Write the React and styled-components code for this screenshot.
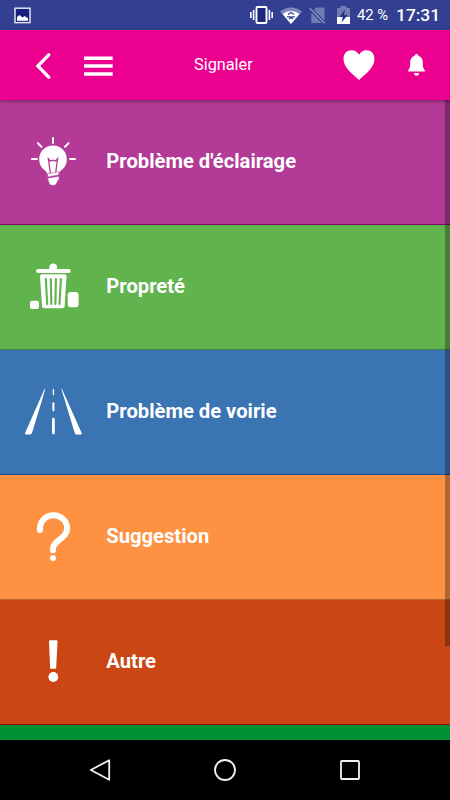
import React from 'react';
import styled, { createGlobalStyle } from 'styled-components';

const GlobalStyle = createGlobalStyle`
  * {
    box-sizing: border-box;
  }
  body {
    margin: 0;
    font-family: Roboto, sans-serif;
    color: #fff;
  }
  svg {
    display: block;
    flex: none;
  }
`;

const Screen = styled.div`
  display: flex;
  flex-direction: column;
  width: 450px;
  height: 800px;
  overflow: hidden;
  background: #000;
`;

const StatusBar = styled.div`
  display: flex;
  align-items: center;
  height: 30px;
  padding: 0 10px 0 14px;
  background: #334092;
`;

const StatusIcons = styled.div`
  display: grid;
  grid-template-columns: 30px 29px 28px 13px;
  align-items: center;
  margin-left: auto;
`;

const Battery = styled.span`
  width: 39px;
  margin-left: 7px;
  font-size: 14.8px;
  line-height: 30px;
  white-space: nowrap;
`;

const Clock = styled.span`
  width: 44px;
  font-size: 17.4px;
  font-weight: 500;
  line-height: 29px;
`;

const Header = styled.header`
  position: relative;
  z-index: 1;
  display: grid;
  grid-template-columns: 84px 30px 1fr 34px 48px 25px;
  align-items: center;
  height: 70px;
  background: #eb008f;
  box-shadow: 0 1px 4px rgba(0, 0, 0, 0.4);
`;

const Title = styled.h1`
  margin: 0 0 0 80px;
  font-size: 16.3px;
  font-weight: 400;
  line-height: 20px;
`;

const BackIcon = styled.svg`
  justify-self: end;
  margin: 2px 33px 0 0;
`;

const MenuIcon = styled.svg`
  margin-top: 1px;
`;

const BellIcon = styled.svg`
  justify-self: end;
`;

const Content = styled.main`
  position: relative;
  flex: 1;
  overflow: hidden;
  background: #009135;
`;

const ScrollThumb = styled.div`
  position: absolute;
  top: 0;
  right: 0;
  width: 5px;
  height: 546px;
  background: rgba(0, 0, 0, 0.3);
`;

const Row = styled.div`
  display: flex;
  align-items: center;
  height: 125px;
  padding-left: 18px;
  background: ${(props) => props.$color};
  border-bottom: 1px solid ${(props) => props.$line};
`;

const RowLabel = styled.span`
  margin: -3px 0 0 18.3px;
  font-size: 20.2px;
  font-weight: 700;
  line-height: 24px;
`;

const NavBar = styled.nav`
  display: flex;
  justify-content: space-around;
  align-items: center;
  height: 60px;
  padding: 0 37px;
  background: #000;
`;

const RowIcon = ({ children }) => (
  <svg width="70" height="70" viewBox="0 0 70 70" fill="#fff">{children}</svg>
);

const BulbIcon = () => (
  <RowIcon>
    <path d="M35 10.9v5M19.9 16.200l3.500 3.500M50.500 16.200l-3.500 3.500M13.900 32h5M52 32h5" stroke="#fff" strokeWidth="2" strokeLinecap="round" />
    <path d="M35 18.4a13.800 13.800 0 0 1 13.800 14c0 5-2.400 8.500-5.600 10.800-1.200.9-1.800 1.800-2 3.200H28.800c-.2-1.400-.8-2.300-2-3.200-3.200-2.300-5.600-5.800-5.600-10.800a13.800 13.800 0 0 1 13.800-14z" />
    <path d="M32.500 47L30.400 31.800l2 2.200 2.600-.9 2.600.9 2-2.200L37.500 47" fill="none" stroke="#b33a96" strokeWidth="1.300" />
    <path d="M29.500 46.800l11.300-2.100v3.200L29.500 50zM29.500 51.300L41 49.200v3.200l-1.700 1.800c-.3 2.600-2 4.400-4.300 4.400-2.200 0-3.600-1.300-4.100-3.100z" stroke="#b33a96" strokeWidth=".5" />
  </RowIcon>
);

const TrashIcon = () => (
  <RowIcon>
    <circle cx="35.2" cy="15.5" r="3.900" />
    <rect x="18" y="17" width="34.7" height="4" rx="2" />
    <path d="M24 22.300h22.700q2 0 1.900 2l-2 30q-.2 2-2.200 2H26.200q-2 0-2.200-2l-2-30q-.1-2 2-2z" />
    <path d="M27.800 27l1.400 25M32.800 27l.5 25M37.900 27l-.5 25M42.900 27l-1.400 25" stroke="#61b34e" strokeWidth="2.100" strokeLinecap="round" />
    <rect x="12" y="48.8" width="9" height="8.200" rx="2" />
    <rect x="49.7" y="40" width="10.900" height="15.300" rx="3" />
  </RowIcon>
);

const RoadIcon = () => (
  <RowIcon>
    <path d="M26.600 11.800q.6-.4.5.5L25 20 14 56q-.5 1.400-2 1.400H8.300q-2 0-1-2z" />
    <path d="M43.900 11.800q-.6-.4-.5.500l2.400 7.700 11 36.200q.5 1.400 2 1.400h3.600q2 0 1-2z" />
    <rect x="34.7" y="12" width="1.400" height="6.200" rx=".7" />
    <rect x="34.400" y="25.200" width="2" height="9" rx="1" />
    <rect x="34" y="40.800" width="2.800" height="16.400" rx="1.200" />
  </RowIcon>
);

const QuestionIcon = () => (
  <RowIcon>
    <path d="M21.900 27.900V27C21.900 19 27.900 13.200 35.500 13.200S49.200 19 49.200 26.500C49.200 36.500 35 38.500 35 46.800v1.200" fill="none" stroke="#fff" strokeWidth="6" />
    <path d="M21.900 26.900v1M35 47.500v.8" stroke="#fff" strokeWidth="6" strokeLinecap="round" />
    <circle cx="35" cy="56.100" r="3.200" stroke="#ff9142" strokeWidth=".4" />
  </RowIcon>
);

const ExclamationIcon = () => (
  <RowIcon>
    <path d="M32 13.200h6.600q1 0 .9 1L38.200 41q-.1.800-1 .800h-4.100q-.9 0-1-.800l-1.100-26.800q0-1 1-1z" />
    <circle cx="35.300" cy="50" r="4.900" />
  </RowIcon>
);

const rows = [
  { label: "Problème d'éclairage", color: '#b33a96', line: '#7b0c68', Icon: BulbIcon },
  { label: 'Propreté', color: '#61b34e', line: '#3f8040', Icon: TrashIcon },
  { label: 'Problème de voirie', color: '#3a74b3', line: '#17508e', Icon: RoadIcon },
  { label: 'Suggestion', color: '#ff9142', line: '#b76431', Icon: QuestionIcon },
  { label: 'Autre', color: '#ca4715', line: '#93100c', Icon: ExclamationIcon },
];

const App = () => (
  <>
    <GlobalStyle />
    <Screen>
      <StatusBar>
        <svg width="17" height="17" viewBox="0 0 17 17">
          <rect x="1" y="1.200" width="15" height="14.400" fill="#17217d" stroke="#e1e3f2" strokeWidth="1.500" />
          <path d="M3 13.800V10l2.500-2 3 2.500 2-1.500 3.500 2.300v2.500z" fill="#fff" />
        </svg>
        <StatusIcons>
          <svg width="23" height="18" viewBox="0 0 23 18" fill="none" stroke="#fff">
            <rect x="6.500" y="1" width="10" height="16" rx="1" fill="#1b277f" strokeWidth="1.900" />
            <path d="M.8 6v6M3.600 4v10M22.200 6v6M19.400 4v10" strokeWidth="1.600" />
          </svg>
          <svg width="22" height="17" viewBox="0 0 22 17">
            <path d="M0 4.500Q11-3.400 22 4.500L11 17z" fill="#7e87bb" />
            <path d="M2.500 7Q11 1 19.500 7L11 17z" fill="#fff" />
            <path d="M8 7.500l3-2 3 2M7 9.800h8M9 12l2-1.200 2 1.200" fill="none" stroke="#334092" strokeWidth="1.200" />
          </svg>
          <svg width="18" height="17" viewBox="0 0 18 17">
            <path d="M4.600 3L7 .5h8.500v13.200z" fill="#707ab3" />
            <path d="M2.300 5.500L12.800 16H2.300z" fill="#707ab3" />
            <path d="M1.200 1.200l15 15" stroke="#334092" strokeWidth="2.400" />
            <path d="M.7 1.200l15 15" stroke="#8991c2" strokeWidth="1.500" />
          </svg>
          <svg width="13" height="18" viewBox="0 0 13 18">
            <path d="M0 2h3.500V0h6v2H13v16H0z" fill="#707ab3" />
            <path d="M0 11h13v7H0z" fill="#fff" />
            <path d="M8 3.500L2.300 11h3.500L4.500 16.500 10.700 9H7z" fill="#26327f" />
          </svg>
        </StatusIcons>
        <Battery>42 %</Battery>
        <Clock>17:31</Clock>
      </StatusBar>
      <Header>
        <BackIcon width="17" height="28" viewBox="0 0 17 28">
          <path d="M14.700 2.800L3.900 14l10.800 11.200" fill="none" stroke="#fff" strokeWidth="3.300" strokeLinecap="round" />
        </BackIcon>
        <MenuIcon width="29" height="20" viewBox="0 0 29 20">
          <path d="M0 2.200h28.700M0 10h28.700M0 17.900h28.700" stroke="#fff" strokeWidth="3.500" />
        </MenuIcon>
        <Title>Signaler</Title>
        <svg width="32" height="32" viewBox="0 0 32 32" fill="#fff">
          <path d="M16 31C10 25.500.5 19 .5 9.800.5 4.500 4 1.200 8.500 1.200c3.500 0 6.200 1.800 7.500 4.500 1.300-2.700 4-4.500 7.500-4.500 4.500 0 8 3.300 8 8.600C31.500 19 22 25.500 16 31z" />
        </svg>
        <BellIcon width="18" height="22" viewBox="0 0 18 22" fill="#fff">
          <path d="M9.500 0c1 0 1.700.6 1.700 1.700 3.200.9 4.600 3.500 4.600 6.600 0 4.200.3 6.500 2.100 8.100v1.200H1.100v-1.200c1.800-1.600 2.100-3.900 2.100-8.100 0-3.100 1.400-5.700 4.600-6.600C7.800.6 8.500 0 9.500 0zM6.900 18.900h5.200c-.1 1.800-1.100 2.800-2.600 2.800s-2.500-1-2.600-2.800z" />
        </BellIcon>
      </Header>
      <Content>
        {rows.map(({ label, color, line, Icon }) => (
          <Row key={label} $color={color} $line={line}>
            <Icon />
            <RowLabel>{label}</RowLabel>
          </Row>
        ))}
        <ScrollThumb />
      </Content>
      <NavBar>
        <svg width="22" height="22" viewBox="0 0 22 22" fill="none" stroke="#f2f2f2" strokeWidth="1.800" strokeLinejoin="round">
          <path d="M20.200 1.200v19.600L1.800 11z" />
        </svg>
        <svg width="22" height="22" viewBox="0 0 22 22" fill="none" stroke="#f2f2f2" strokeWidth="1.800">
          <circle cx="11" cy="11" r="10" />
        </svg>
        <svg width="22" height="22" viewBox="0 0 22 22" fill="none" stroke="#f2f2f2" strokeWidth="1.800">
          <rect x="2" y="2" width="18" height="18" rx=".8" />
        </svg>
      </NavBar>
    </Screen>
  </>
);

export default App;
